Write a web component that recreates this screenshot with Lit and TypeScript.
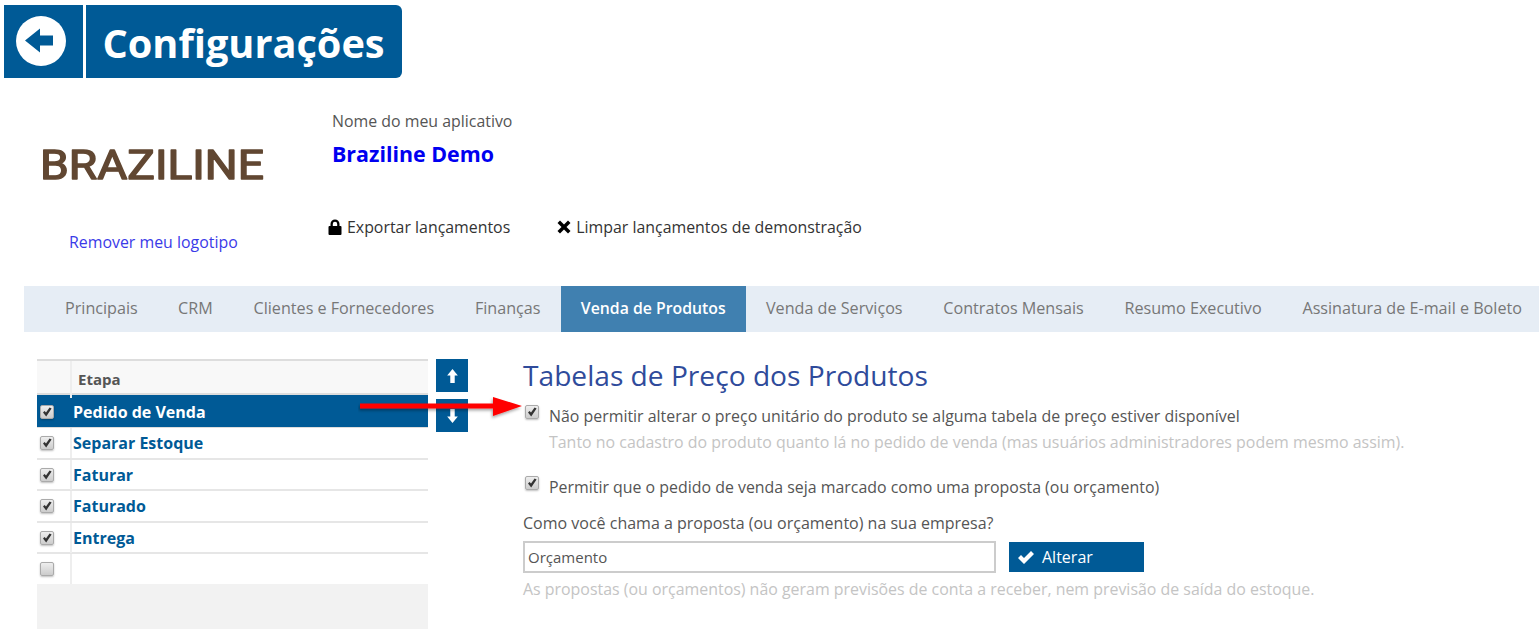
import { LitElement, html, css, svg } from "lit";
import { customElement } from "lit/decorators.js";

const check = svg`<svg class="ck" viewBox="0 0 14 14"><path d="M3 7.6 L4.6 6 L6 7.6 L9.6 2.4 L11.6 3.6 L6.2 11.4 Z" fill="#333"/></svg>`;

@customElement("app-root")
export class AppRoot extends LitElement {
  static styles = css`
    :host { display: block; position: relative; width: 1539px; height: 629px; overflow: hidden; background: #fff; font-family: "Open Sans", sans-serif; color: #555; }
    .head { display: flex; gap: 3px; padding: 5px 0 0 4px; height: 73px; }
    .back { width: 79px; height: 73px; background: #005a96; display: flex; align-items: center; justify-content: center; }
    .back svg { width: 50px; height: 50px; margin-left: -5px; margin-top: -1px; }
    .title { width: 316px; height: 73px; background: #005a96; color: #fff; border-radius: 0 6px 6px 0; font-size: 39.7px; font-weight: 700; line-height: 77px; padding-left: 16.5px; box-sizing: border-box; white-space: nowrap; }
    .top { display: flex; height: 208px; }
    .logoCol { width: 332px; flex: none; display: flex; flex-direction: column; }
    .logo { display: block; width: 280px; height: 44px; margin: 66px 0 0 36px; overflow: visible; filter: blur(.4px); }
    .logo text { font-family: Roboto, sans-serif; font-weight: 400; font-size: 40px; fill: #614732; stroke: #614732; stroke-width: 1.4; stroke-linejoin: round; }
    .remove { margin: 43px 0 0 69px; font-size: 15.9px; line-height: 22px; color: #3a3ae8; white-space: nowrap; }
    .infoCol { display: flex; flex-direction: column; }
    .appLabel { margin-top: 32px; font-size: 15.9px; line-height: 22px; color: #555; }
    .appName { margin-top: 7px; font-size: 21.4px; font-weight: 700; line-height: 30px; color: #0000f0; }
    .actions { display: flex; margin: 47px 0 0 -5px; font-size: 15.9px; line-height: 22px; color: #333; gap: 46px; }
    .action { display: flex; align-items: center; gap: 4px; white-space: nowrap; }
    .action svg { width: 16px; height: 16px; flex: none; }
    .tabs { display: flex; height: 46px; margin-left: 24px; padding-left: 20px; background: #e6edf5; }
    .tab { padding: 0 20.4px; font-size: 16.15px; line-height: 45px; color: #777; white-space: nowrap; }
    .tab.first { padding-left: 21px; padding-right: 20px; }
    .tab.on { background: #4080b0; color: #fff; font-weight: 600; font-size: 15.8px; padding: 0 20px; }
    .main { display: flex; margin: 27px 0 0 37px; }
    .grid { width: 391px; flex: none; height: 270px; background: #f2f2f2; }
    .row { display: grid; grid-template-columns: 33px 1fr; height: 31.5px; background: #fff; box-sizing: border-box; border-bottom: 2px solid #e6e6e6; }
    .row > .cb { display: flex; align-items: center; padding-left: 3px; }
    .row > .name { border-left: 2px solid #eee; padding-left: 1px; font-size: 16px; font-weight: 700; color: #005a96; line-height: 30px; white-space: nowrap; }
    .row.hd { height: 36px; background: #f8f8f8; border-top: 2px solid #ddd; border-bottom: 2px solid #ddd; }
    .row.hd > .name { padding-left: 6px; font-size: 15px; color: #555; line-height: 37px; }
    .row.sel { background: #005a96; height: 33px; border-bottom: 1px solid #ddd; }
    .row.sel > .name { color: #fff; border-left: 0; padding-left: 3px; line-height: 34px; }
    .row.last { border-bottom: 0; height: 30px; }
    .box { width: 14px; height: 14px; border-radius: 2px; border: 1px solid #aaa; box-sizing: border-box; background: linear-gradient(#eee, #ccc); box-shadow: 0 1px 2px rgba(0,0,0,.25); display: inline-flex; position: relative; flex: none; }
    .ck { position: absolute; left: -1px; top: -1px; width: 14px; height: 14px; }
    .moves { display: flex; flex-direction: column; gap: 7px; margin-left: 8px; width: 32px; flex: none; }
    .move { height: 33px; background: #005a96; display: flex; align-items: center; justify-content: center; }
    .move svg { width: 13px; height: 16px; }
    .content { margin-left: 55px; display: flex; flex-direction: column; width: 1000px; }
    .h { font-size: 28.15px; line-height: 33px; color: #2f4b9b; white-space: nowrap; }
    .opt { display: flex; margin-left: 2px; gap: 10px; font-size: 15.92px; line-height: 24px; color: #555; white-space: nowrap; }
    .opt .box { margin-top: 1px; display: flex; }
    .hint { color: #c4c4c4; font-size: 15.93px; line-height: 24px; white-space: nowrap; }
    .ind { margin-left: 26px; margin-top: 2px; }
    .q { font-size: 16px; line-height: 24px; color: #555; margin-top: 12px; }
    .form { display: flex; margin-top: 6px; gap: 13px; align-items: center; }
    .input { width: 473px; height: 32px; box-sizing: border-box; border: 2px solid #ccc; font-size: 15px; line-height: 28px; padding-left: 3px; color: #555; }
    .btn { width: 135px; height: 30px; background: #005a96; color: #fff; font-size: 16px; display: flex; align-items: center; gap: 7px; padding-left: 8px; box-sizing: border-box; }
    .btn svg { width: 18px; height: 15px; }
    .arrow { position: absolute; left: 358px; top: 394px; width: 170px; height: 30px; pointer-events: none; }
    .o1 { margin-top: 12px; }
    .o2 { margin-top: 21px; }
    .last-hint { margin-top: 4px; }
  `;

  private box(on = true) { return html`<span class="box">${on ? check : ""}</span>`; }

  render() {
    const tabs = ["Principais","CRM","Clientes e Fornecedores","Finanças","Venda de Produtos","Venda de Serviços","Contratos Mensais","Resumo Executivo","Assinatura de E-mail e Boleto"];
    const rows = ["Separar Estoque","Faturar","Faturado","Entrega"];
    return html`
      <div class="head">
        <div class="back"><svg viewBox="0 0 50 50"><circle cx="25" cy="25" r="25" fill="#fff"/><path d="M9 24.5 L24 12.5 V19.5 H37 V29.5 H24 V36.5 Z" fill="#005a96"/></svg></div>
        <div class="title">Configurações</div>
      </div>
      <div class="top">
        <div class="logoCol">
          <svg class="logo" viewBox="0 0 280 44"><text x="4" y="35" textLength="224" lengthAdjust="spacingAndGlyphs">BRAZILINE</text></svg>
          <div class="remove">Remover meu logotipo</div>
        </div>
        <div class="infoCol">
          <div class="appLabel">Nome do meu aplicativo</div>
          <div class="appName">Braziline Demo</div>
          <div class="actions">
            <div class="action"><svg viewBox="0 0 16 16"><path d="M3.5 7 V5 a4.5 4.5 0 0 1 9 0 V7 h1 a1 1 0 0 1 1 1 v7 a1 1 0 0 1 -1 1 H2.5 a1 1 0 0 1 -1 -1 V8 a1 1 0 0 1 1 -1 Z M5.8 7 h4.4 V5 a2.2 2.2 0 0 0 -4.4 0 Z" fill="#000" fill-rule="evenodd"/></svg>Exportar lançamentos</div>
            <div class="action"><svg viewBox="0 0 16 16"><path d="M1.5 4 L4 1.5 L8 5.5 L12 1.5 L14.5 4 L10.5 8 L14.5 12 L12 14.5 L8 10.5 L4 14.5 L1.5 12 L5.5 8 Z" fill="#000"/></svg>Limpar lançamentos de demonstração</div>
          </div>
        </div>
      </div>
      <div class="tabs">
        ${tabs.map((t, i) => html`<div class="tab ${i === 4 ? "on" : ""} ${i === 0 ? "first" : ""}">${t}</div>`)}
      </div>
      <div class="main">
        <div class="grid">
          <div class="row hd"><div class="cb"></div><div class="name">Etapa</div></div>
          <div class="row sel"><div class="cb">${this.box()}</div><div class="name">Pedido de Venda</div></div>
          ${rows.map(r => html`<div class="row"><div class="cb">${this.box()}</div><div class="name">${r}</div></div>`)}
          <div class="row last"><div class="cb">${this.box(false)}</div><div class="name"></div></div>
        </div>
        <div class="moves">
          <div class="move"><svg viewBox="0 0 14 18"><path d="M7 1 L13 8.5 H9.5 V17 H4.5 V8.5 H1 Z" fill="#fff"/></svg></div>
          <div class="move"><svg viewBox="0 0 14 18"><path d="M7 17 L13 9.5 H9.5 V1 H4.5 V9.5 H1 Z" fill="#fff"/></svg></div>
        </div>
        <div class="content">
          <div class="h">Tabelas de Preço dos Produtos</div>
          <div class="opt o1">${this.box()}<span>Não permitir alterar o preço unitário do produto se alguma tabela de preço estiver disponível</span></div>
          <div class="hint ind">Tanto no cadastro do produto quanto lá no pedido de venda (mas usuários administradores podem mesmo assim).</div>
          <div class="opt o2">${this.box()}<span>Permitir que o pedido de venda seja marcado como uma proposta (ou orçamento)</span></div>
          <div class="q">Como você chama a proposta (ou orçamento) na sua empresa?</div>
          <div class="form">
            <div class="input">Orçamento</div>
            <div class="btn"><svg viewBox="0 0 18 15"><path d="M1 8 L4 5 L7 8 L14 1 L17 4 L7 14 Z" fill="#fff"/></svg>Alterar</div>
          </div>
          <div class="hint last-hint">As propostas (ou orçamentos) não geram previsões de conta a receber, nem previsão de saída do estoque.</div>
        </div>
      </div>
      <svg class="arrow" viewBox="0 0 170 30"><defs><filter id="s" x="-5%" y="-30%" width="110%" height="180%"><feDropShadow dx="-1" dy="2" stdDeviation="1.5" flood-color="#000" flood-opacity=".35"/></filter></defs><path d="M2 9.5 H135 V3 L164 12 L135 22 V14.5 H2 Z" fill="#f00" filter="url(#s)"/></svg>
    `;
  }
}
